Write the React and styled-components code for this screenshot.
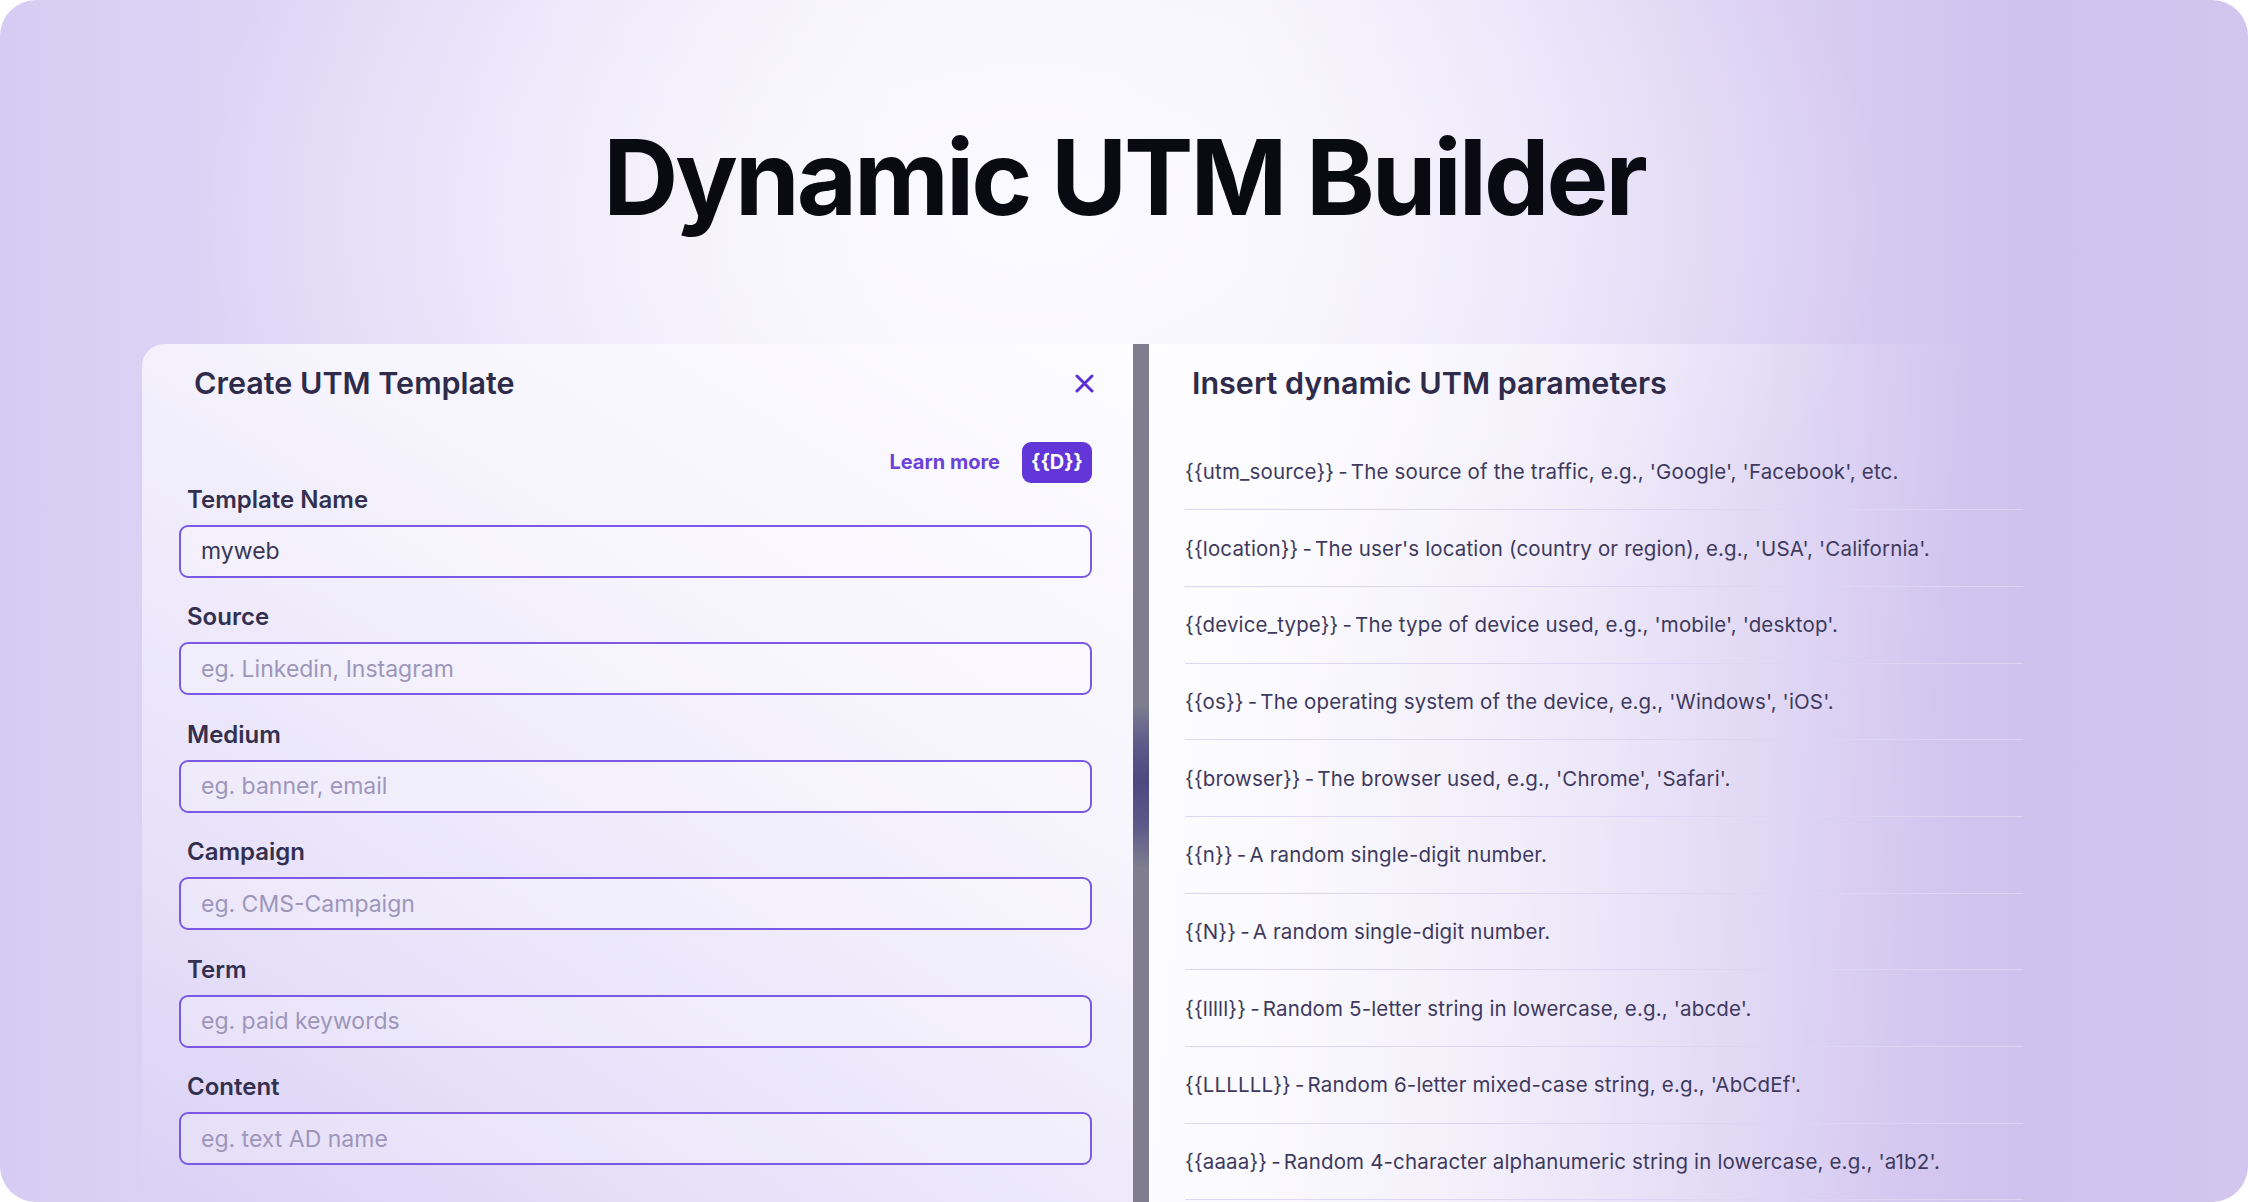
import styled, { createGlobalStyle } from "styled-components";

const GlobalStyle = createGlobalStyle`
  html, body {
    margin: 0;
    padding: 0;
    background: #ffffff;
  }

  body {
    font-family: Inter, "Noto Sans", sans-serif;
  }
`;

const Frame = styled.div`
  width: 2248px;
  height: 1202px;
  border-radius: 36px;
  overflow: hidden;
  display: flex;
  flex-direction: column;
  align-items: center;
  background:
    radial-gradient(ellipse 38% 42% at 46% 18%, #fbfaff 0%, rgba(251, 250, 255, 0) 100%),
    linear-gradient(90deg, #d6ccf3 0%, #e3dbf7 20%, #f4f1fc 40%, #f3f0fc 55%, #ddd3f4 75%, #cfc2ee 90%, #d2c6ef 100%);
`;

const Title = styled.h1`
  margin: 125px 0 0;
  font-size: 104px;
  line-height: 1;
  font-weight: 700;
  letter-spacing: -3px;
  color: #0a0a12;
`;

const Workspace = styled.div`
  align-self: stretch;
  flex: 1;
  min-height: 0;
  display: flex;
  margin-top: 115px;
  padding-left: 142px;
`;

const FormPanel = styled.section`
  width: 991px;
  flex-shrink: 0;
  box-sizing: border-box;
  padding: 24px 41px 0 37px;
  border-top-left-radius: 22px;
  background: linear-gradient(212deg, #fdfcff 0%, #f6f4fd 35%, #e9e4fa 70%, #dad1f5 100%);
`;

const Divider = styled.div`
  width: 16px;
  flex-shrink: 0;
  background: linear-gradient(
    180deg,
    #7f7d8f 0%,
    #7f7d8f 42%,
    #5c5889 47%,
    #4e4981 51%,
    #5c5889 56%,
    #7f7d8f 61%,
    #7f7d8f 100%
  );
`;

const ParamsPanel = styled.section`
  flex: 1;
  padding: 24px 0 0 36px;
  background: linear-gradient(95deg, rgba(255, 255, 255, 0.8) 0%, rgba(255, 255, 255, 0.45) 35%, rgba(255, 255, 255, 0) 70%);
`;

const PanelHeader = styled.div`
  display: flex;
  align-items: center;
  justify-content: space-between;
  margin-left: ${(p) => p.$indent || 0}px;
  margin-right: -2px;
`;

const PanelTitle = styled.h2`
  margin: 0;
  font-size: 30.5px;
  line-height: 1;
  font-weight: 600;
  color: #2e2b4b;
`;

const CloseButton = styled.button`
  display: flex;
  padding: 0;
  border: none;
  background: none;
  color: #5a2fd4;
`;

const Actions = styled.div`
  display: flex;
  align-items: center;
  justify-content: flex-end;
  gap: 22px;
  height: 41px;
  margin-top: 43px;
`;

const LearnMore = styled.a`
  font-size: 20px;
  font-weight: 700;
  color: #6a42d8;
  text-decoration: none;
`;

const DynamicButton = styled.button`
  width: 70px;
  height: 41px;
  border: none;
  border-radius: 9px;
  background: #6236d8;
  color: #ffffff;
  font-family: inherit;
  font-size: 20px;
  font-weight: 700;
`;

const Fields = styled.div`
  display: flex;
  flex-direction: column;
  gap: 27.6px;
  margin-top: 5px;
`;

const Field = styled.label`
  display: flex;
  flex-direction: column;
`;

const FieldLabel = styled.span`
  margin: 0 0 13px 8px;
  font-size: 24px;
  line-height: 1;
  font-weight: 600;
  color: #33304f;
`;

const TextInput = styled.input`
  box-sizing: border-box;
  height: 53px;
  padding: 0 20px;
  border: 2px solid #7b59e4;
  border-radius: 9px;
  background: rgba(255, 255, 255, 0.25);
  font-family: inherit;
  font-size: 23px;
  color: #3a3756;
  outline: none;

  &::placeholder {
    color: #9d96ba;
  }
`;

const ParamList = styled.ul`
  width: 838px;
  margin: 35px 0 0;
  padding: 0;
  list-style: none;
`;

const ParamRow = styled.li`
  box-sizing: border-box;
  height: 76.7px;
  display: flex;
  align-items: center;
  border-bottom: 1.5px solid #dcd5f4;
  font-size: 20.5px;
  letter-spacing: 0.15px;
  color: #3e3a5e;
  white-space: nowrap;
`;

const Dash = styled.span`
  margin: 0 3px 0 4px;
`;

const fields = [
  { label: "Template Name", value: "myweb" },
  { label: "Source", placeholder: "eg. Linkedin, Instagram" },
  { label: "Medium", placeholder: "eg. banner, email" },
  { label: "Campaign", placeholder: "eg. CMS-Campaign" },
  { label: "Term", placeholder: "eg. paid keywords" },
  { label: "Content", placeholder: "eg. text AD name" },
];

const params = [
  ["{{utm_source}}", "The source of the traffic, e.g., 'Google', 'Facebook', etc."],
  ["{{location}}", "The user's location (country or region), e.g., 'USA', 'California'."],
  ["{{device_type}}", "The type of device used, e.g., 'mobile', 'desktop'."],
  ["{{os}}", "The operating system of the device, e.g., 'Windows', 'iOS'."],
  ["{{browser}}", "The browser used, e.g., 'Chrome', 'Safari'."],
  ["{{n}}", "A random single-digit number."],
  ["{{N}}", "A random single-digit number."],
  ["{{lllll}}", "Random 5-letter string in lowercase, e.g., 'abcde'."],
  ["{{LLLLLL}}", "Random 6-letter mixed-case string, e.g., 'AbCdEf'."],
  ["{{aaaa}}", "Random 4-character alphanumeric string in lowercase, e.g., 'a1b2'."],
];

const App = () => (
  <Frame>
    <GlobalStyle />
    <Title>Dynamic UTM Builder</Title>
    <Workspace>
      <FormPanel>
        <PanelHeader $indent={15}>
          <PanelTitle>Create UTM Template</PanelTitle>
          <CloseButton aria-label="Close">
            <svg width="19" height="19" viewBox="0 0 19 19" fill="none">
              <path d="M2 2L17 17M17 2L2 17" stroke="currentColor" strokeWidth="3" strokeLinecap="round" />
            </svg>
          </CloseButton>
        </PanelHeader>
        <Actions>
          <LearnMore href="#">Learn more</LearnMore>
          <DynamicButton>{"{{D}}"}</DynamicButton>
        </Actions>
        <Fields>
          {fields.map(({ label, value, placeholder }) => (
            <Field key={label}>
              <FieldLabel>{label}</FieldLabel>
              <TextInput defaultValue={value} placeholder={placeholder} />
            </Field>
          ))}
        </Fields>
      </FormPanel>
      <Divider />
      <ParamsPanel>
        <PanelHeader $indent={7}>
          <PanelTitle>Insert dynamic UTM parameters</PanelTitle>
        </PanelHeader>
        <ParamList>
          {params.map(([key, text]) => (
            <ParamRow key={key}>
              {key}
              <Dash>-</Dash>
              {text}
            </ParamRow>
          ))}
        </ParamList>
      </ParamsPanel>
    </Workspace>
  </Frame>
);

export default App;
